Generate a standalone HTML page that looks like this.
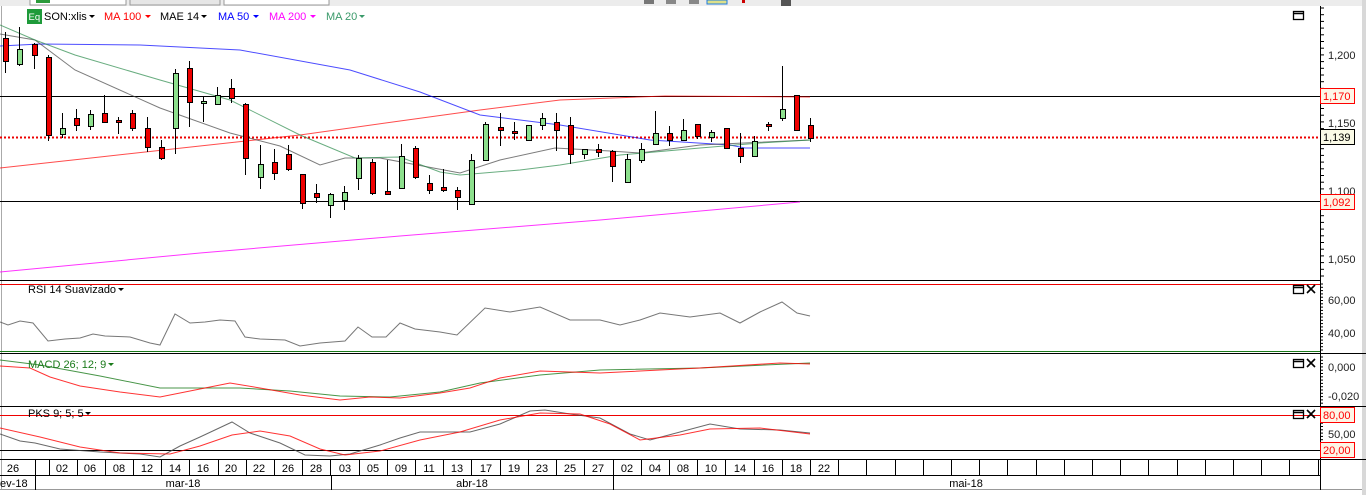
<!DOCTYPE html>
<html><head><meta charset="utf-8"><style>
html,body{margin:0;padding:0;background:#fff;width:1366px;height:495px;overflow:hidden;font-family:"Liberation Sans",sans-serif}
svg{position:absolute;left:0;top:0}
</style></head><body>
<svg id="s" width="1366" height="495" xmlns="http://www.w3.org/2000/svg" font-family="Liberation Sans, sans-serif" font-size="11">
<rect x="0" y="0" width="1366" height="6" fill="#ececec"/>
<rect x="30" y="-2" width="96" height="7" fill="#fff" stroke="#999"/>
<rect x="36" y="-2" width="14" height="5" fill="#2a9a3a"/>
<rect x="130" y="-2" width="90" height="7" fill="#e6e6e6" stroke="#999"/>
<rect x="224" y="-2" width="105" height="7" fill="#fff" stroke="#999"/>
<rect x="644" y="0" width="10" height="4" fill="#777"/><rect x="666" y="0" width="10" height="4" fill="#888"/><rect x="689" y="0" width="10" height="4" fill="#888"/>
<rect x="707" y="0" width="20" height="4" fill="#dde08a" stroke="#1e7be0"/>
<rect x="742" y="0" width="3" height="3" fill="#c00"/>
<rect x="781" y="0" width="10" height="6" fill="#555"/>
<rect x="1362" y="0" width="4" height="495" fill="#d8d8d8"/>
<line x1="1.5" y1="6" x2="1.5" y2="490" stroke="#aaa"/>
<g id="g"></g>
</svg>
<script>
var g=document.getElementById('g'),h='';
function L(pts,c,w,o){h+='<polyline fill="none" stroke="'+c+'" stroke-width="'+(w||1)+'" opacity="'+(o||1)+'" points="'+pts+'"/>';}
function ln(x1,y1,x2,y2,c,extra){h+='<line x1="'+x1+'" y1="'+y1+'" x2="'+x2+'" y2="'+y2+'" stroke="'+c+'" '+(extra||'')+'/>';}
function t(x,y,s,c,a,fs){h+='<text x="'+x+'" y="'+y+'" fill="'+(c||'#000')+'"'+(a?' text-anchor="'+a+'"':'')+(fs?' font-size="'+fs+'"':'')+'>'+s+'</text>';}
ln(0,280.5,1320,280.5,'#000');ln(0,353.5,1366,353.5,'#000');ln(0,406.5,1366,406.5,'#000');ln(0,459.5,1366,459.5,'#000');
ln(0,475.5,1320,475.5,'#000');ln(0,489.5,1362,489.5,'#999');
ln(1320.5,6,1320.5,490,'#000');
ln(0,96.5,1320,96.5,'#000');ln(0,201.5,1320,201.5,'#000');
ln(0,137.5,1320,137.5,'#e00','stroke-width="2" stroke-dasharray="2,2"');
ln(0,284.5,1320,284.5,'#e00');ln(0,351.5,1320,351.5,'#1a7a1a');
ln(0,415.5,1320,415.5,'#e00');ln(0,450.5,1320,450.5,'#000');
L('0,272 200,253 400,236 600,220 800,202','#f0f',1,.8);
L('0,168 100,157 200,146 300,135 400,121 480,110 560,100 665,96 810,97','#f00',1,.7);
L('0,46 40,44 140,45 240,50 350,70 420,92 480,115 560,125 650,140 730,145 745,148 810,148','#00f',1,.7);
L('0,34 35,40 75,70 160,108 230,133 280,146 320,165 345,158 380,158 460,173 500,160 555,148 610,151 640,153 700,145 810,140','#444',1,.7);
L('0,25 35,40 75,55 160,80 230,100 300,135 355,158 400,157 440,172 460,175 520,170 560,165 620,155 700,148 760,143 810,140','#2a8a4a',1,.7);
var c=[[5,'r',38,61,32,73],[19,'g',49,64,27,66],[34,'r',44,55,43,69],[48,'r',57,135,55,141],[62,'g',128,134,113,138],[76,'r',118,125,109,131],[90,'g',114,126,110,130],[104,'r',113,122,95,122],[118,'r',120,122,117,134],[132,'r',113,128,110,131],[147,'r',128,147,117,152],[161,'r',147,158,140,160],[175,'g',73,128,69,154],[189,'r',68,102,61,127],[203,'g',101,103,97,122],[217,'g',95,104,87,104],[231,'r',88,98,79,103],[245,'r',104,158,103,175],[260,'g',164,177,145,189],[274,'r',162,173,149,180],[288,'r',154,169,145,171],[302,'r',174,203,174,209],[316,'r',193,197,184,203],[330,'g',194,205,193,218],[344,'g',192,200,186,210],[358,'g',158,178,155,190],[372,'r',162,193,159,195],[387,'r',191,194,160,194],[401,'g',156,188,144,188],[415,'r',148,177,146,179],[429,'r',183,190,175,194],[443,'r',187,190,169,192],[457,'r',190,197,187,210],[471,'g',160,204,154,204],[485,'g',124,160,122,161],[500,'r',127,130,113,146],[514,'r',131,133,122,140],[528,'g',125,140,125,141],[542,'g',118,125,113,130],[556,'r',122,130,113,151],[570,'r',125,154,117,164],[584,'g',149,154,149,159],[598,'r',149,152,144,157],[612,'r',151,166,150,182],[627,'g',159,182,154,182],[641,'g',149,160,143,163],[655,'g',133,144,111,144],[669,'r',133,140,126,146],[683,'g',130,140,119,140],[697,'r',124,136,124,139],[711,'g',132,137,130,142],[726,'r',128,148,128,149],[740,'r',148,156,133,163],[754,'g',141,156,136,156],[768,'r',124,126,122,131],[782,'g',109,118,66,121],[796,'r',95,130,95,130],[810,'r',125,138,118,142]];
c.forEach(function(k){ln(k[0]+.5,k[4],k[0]+.5,k[5],'#000');h+='<rect x="'+(k[0]-2)+'.5" y="'+k[2]+'.5" width="5" height="'+Math.max(1,k[3]-k[2])+'" fill="'+(k[1]=='r'?'#e00':'#8de08d')+'" stroke="#000"/>';});
L('0,322 8,325 20,321 33,323 48,341 65,339 80,338 93,334 105,336 130,337 150,343 160,345 175,314 190,323 205,322 220,320 235,321 245,337 260,339 285,340 300,346 320,343 345,341 358,327 372,337 386,337 400,323 415,329 440,332 457,335 485,308 510,312 540,307 570,320 600,320 620,325 640,320 660,313 690,317 720,313 740,323 760,312 782,302 797,313 810,316','#555',1,.8);
L('0,360 40,365 100,376 160,388 240,388 290,391 340,396 390,397 440,392 480,383 540,375 600,370 700,368 810,363','#1a7a1a',1,.8);
L('0,366 30,368 50,377 80,386 120,392 160,397 200,389 230,383 260,388 300,395 340,400 370,397 400,398 440,393 470,388 500,378 540,371 600,373 700,368 780,363 810,364','#f00',1,.8);
L('0,434 20,441 35,443 60,449 100,452 140,454 160,457 180,446 200,437 232,422 250,433 280,443 305,455 330,456 350,454 380,445 400,438 420,432 470,432 500,424 530,411 545,410 570,414 600,418 630,434 650,440 680,432 710,424 740,429 780,430 810,433','#444',1,.8);
L('0,428 40,437 80,447 120,453 170,454 200,446 232,435 260,431 290,436 320,449 345,455 380,451 420,440 460,432 500,420 540,413 580,414 610,424 640,440 680,435 710,429 760,428 810,434','#f00',1,.8);
h+='<rect x="27" y="9" width="15" height="15" fill="#1e9a3a"/>';t(28.5,20,'Eq','#fff',null,9.5);
t(44,20,'SON:xlis','#000');h+='<path d="M89 15h6l-3 3z" fill="#000"/>';
t(104,20,'MA 100','#f00');h+='<path d="M145 15h6l-3 3z" fill="#f00"/>';
t(160,20,'MAE 14','#000');h+='<path d="M201 15h6l-3 3z" fill="#000"/>';
t(218,20,'MA 50','#00f');h+='<path d="M253 15h6l-3 3z" fill="#00f"/>';
t(269,20,'MA 200','#f0f');h+='<path d="M310 15h6l-3 3z" fill="#f0f"/>';
t(326,20,'MA 20','#3a9a6a');h+='<path d="M359 15h6l-3 3z" fill="#3a9a6a"/>';
t(28,293,'RSI 14 Suavizado','#000');h+='<path d="M118 288h6l-3 3z" fill="#000"/>';
t(28,368,'MACD 26; 12; 9','#1a7a1a');h+='<path d="M108 363h6l-3 3z" fill="#1a7a1a"/>';
t(28,417,'PKS 9; 5; 5','#000');h+='<path d="M85 412h6l-3 3z" fill="#000"/>';
function win(x,y){h+='<rect x="'+x+'.5" y="'+y+'.5" width="10" height="8" fill="none" stroke="#000" stroke-width="1.3"/><line x1="'+x+'" y1="'+(y+2)+'.5" x2="'+(x+11)+'" y2="'+(y+2)+'.5" stroke="#000" stroke-width="1.5"/>';}
function xx(x,y){h+='<path d="M'+x+' '+y+'l8 8M'+(x+8)+' '+y+'l-8 8" stroke="#000" stroke-width="1.6"/>';}
win(1293,11);win(1293,285);xx(1307,285);win(1293,359);xx(1307,359);win(1293,410);xx(1307,410);
for(var y=8;y<280;y+=6.7){ln(1320,y,1324,y,'#000');}
for(var y=284;y<352;y+=3.3){ln(1320,y,1323,y,'#000');}
for(var y=357;y<405;y+=3.3){ln(1320,y,1323,y,'#000');}
for(var y=410;y<458;y+=3.3){ln(1320,y,1323,y,'#000');}
t(1328,59,'1,200','#222');t(1328,127,'1,150','#222');t(1328,195,'1,100','#222');t(1328,263,'1,050','#222');
t(1328,304,'60,00','#222');t(1328,337,'40,00','#222');t(1328,371,'0,000','#222');t(1328,400,'-0,020','#222');t(1328,438,'50,00','#222');
function box(y,s,bd,col,bg){h+='<rect x="1320.5" y="'+y+'.5" width="34" height="15" fill="'+bg+'" stroke="'+bd+'"/>';t(1323,y+12,s,col);}
box(88,'1,170','#f00','#f00','#fdf5e6');box(129,'1,139','#000','#000','#fafae6');box(194,'1,092','#f00','#f00','#fdf5e6');
box(407,'80,00','#f00','#f00','#fdf5e6');box(442,'20,00','#f00','#f00','#fdf5e6');
var d=[['26',13],['02',62],['06',90],['08',119],['12',147],['14',175],['16',203],['20',231],['22',259],['26',288],['28',316],['03',345],['05',373],['09',401],['11',429],['13',457],['17',486],['19',514],['23',542],['25',570],['27',598],['02',627],['04',655],['08',683],['10',711],['14',740],['16',768],['18',796],['22',824]];
d.forEach(function(k){t(k[1],472,k[0],'#000','middle');});
ln(35.5,460,35.5,490,'#000');
for(var x=48.5;x<1320;x+=28.2){ln(Math.round(x)+.5,460,Math.round(x)+.5,476,'#000');}
ln(331.5,476,331.5,490,'#000');ln(613.5,476,613.5,490,'#000');
t(-3,487,'fev-18','#000');t(183,487,'mar-18','#000','middle');t(472,487,'abr-18','#000','middle');t(966,487,'mai-18','#000','middle');
g.innerHTML=h;
</script>
</body></html>
